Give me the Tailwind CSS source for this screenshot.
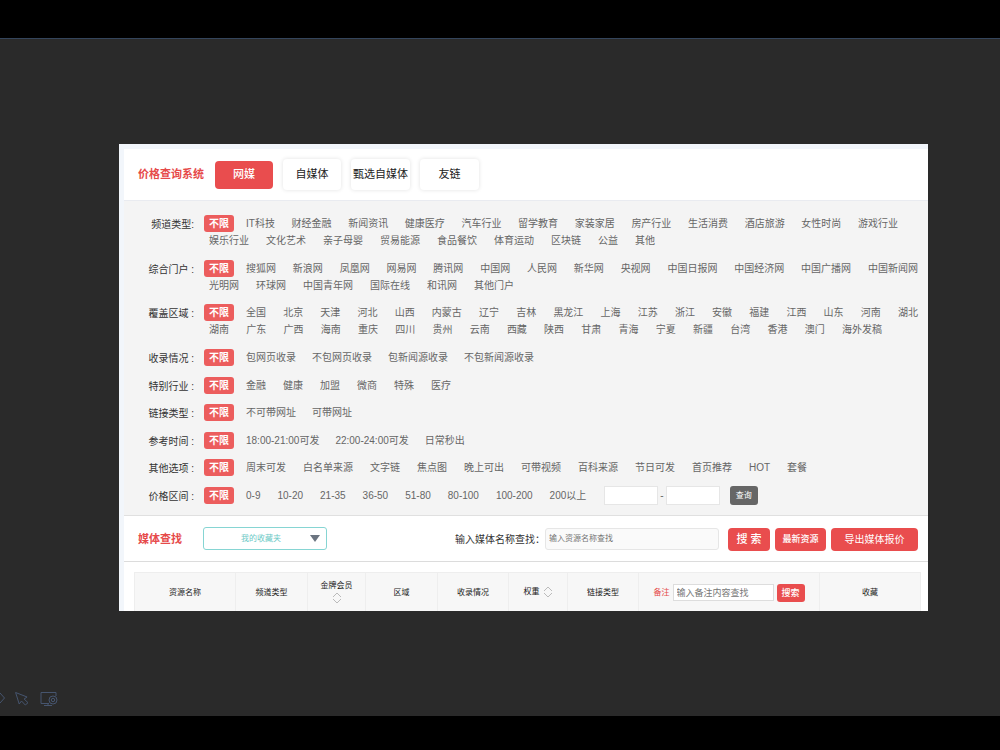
<!DOCTYPE html>
<html lang="zh-CN">
<head>
<meta charset="utf-8">
<title>价格查询系统</title>
<script src="https://cdn.jsdelivr.net/npm/@tailwindcss/browser@4"></script>
</head>
<body class="font-['Liberation_Sans','Noto_Sans_CJK_SC',sans-serif] bg-black">
<div class="flex min-h-screen flex-col py-[34px] pt-[38px]">
  <div class="flex grow flex-col border-t border-[#34455c] bg-[#2a2a2a]">
    <main class="mt-[105px] mr-[72px] ml-[119px] h-[467px] overflow-hidden bg-[#f2f6fb] pt-[5px] pl-[5px] text-[10px] leading-[17px] text-[#666]">

      <header class="flex h-[51px] items-center bg-white pl-3.5 text-[11px]">
        <h1 class="mr-[11px] font-bold text-[#e64a4a]">价格查询系统</h1>
        <nav class="flex items-center gap-[10px] text-[#222]">
          <button class="h-7 w-[58px] rounded bg-[#e94d4e] font-medium text-white">网媒</button>
          <button class="h-[31px] w-[58px] rounded whitespace-nowrap shadow-[0_0_4px_rgba(0,0,0,0.12)]">自媒体</button>
          <button class="h-[31px] w-[59px] rounded whitespace-nowrap shadow-[0_0_4px_rgba(0,0,0,0.12)]">甄选自媒体</button>
          <button class="h-[31px] w-[59px] rounded whitespace-nowrap shadow-[0_0_4px_rgba(0,0,0,0.12)]">友链</button>
        </nav>
      </header>

      <section class="border-t border-b border-t-[#e9ebf0] border-b-[#e0e0e0] bg-[#f4f4f4] pt-[14px] pr-[10px] pb-[11px]">
        <div class="flex h-[289px] flex-col justify-between">

          <div class="flex gap-[10px]">
            <div class="w-[70px] shrink-0 pt-0.5 text-right leading-[15px] text-[#333]">频道类型:</div>
            <div class="grow whitespace-nowrap">
              <div class="flex gap-3"><button class="h-[17px] w-[30px] shrink-0 rounded-[3px] bg-[#ec5d5d] font-bold text-white">不限</button>
                <div class="flex grow justify-between pr-5"><a href="#">IT科技</a><a href="#">财经金融</a><a href="#">新闻资讯</a><a href="#">健康医疗</a><a href="#">汽车行业</a><a href="#">留学教育</a><a href="#">家装家居</a><a href="#">房产行业</a><a href="#">生活消费</a><a href="#">酒店旅游</a><a href="#">女性时尚</a><a href="#">游戏行业</a></div></div>
              <div class="flex gap-[17px] pl-[5px]"><a href="#">娱乐行业</a><a href="#">文化艺术</a><a href="#">亲子母婴</a><a href="#">贸易能源</a><a href="#">食品餐饮</a><a href="#">体育运动</a><a href="#">区块链</a><a href="#">公益</a><a href="#">其他</a></div>
            </div>
          </div>

          <div class="flex gap-[10px]">
            <div class="w-[70px] shrink-0 pt-0.5 text-right leading-[15px] text-[#333]">综合门户 :</div>
            <div class="grow whitespace-nowrap">
              <div class="flex gap-3"><button class="h-[17px] w-[30px] shrink-0 rounded-[3px] bg-[#ec5d5d] font-bold text-white">不限</button>
                <div class="flex grow justify-between"><a href="#">搜狐网</a><a href="#">新浪网</a><a href="#">凤凰网</a><a href="#">网易网</a><a href="#">腾讯网</a><a href="#">中国网</a><a href="#">人民网</a><a href="#">新华网</a><a href="#">央视网</a><a href="#">中国日报网</a><a href="#">中国经济网</a><a href="#">中国广播网</a><a href="#">中国新闻网</a></div></div>
              <div class="flex gap-[17px] pl-[5px]"><a href="#">光明网</a><a href="#">环球网</a><a href="#">中国青年网</a><a href="#">国际在线</a><a href="#">和讯网</a><a href="#">其他门户</a></div>
            </div>
          </div>

          <div class="flex gap-[10px]">
            <div class="w-[70px] shrink-0 pt-0.5 text-right leading-[15px] text-[#333]">覆盖区域 :</div>
            <div class="grow whitespace-nowrap">
              <div class="flex gap-3"><button class="h-[17px] w-[30px] shrink-0 rounded-[3px] bg-[#ec5d5d] font-bold text-white">不限</button>
                <div class="flex grow justify-between"><a href="#">全国</a><a href="#">北京</a><a href="#">天津</a><a href="#">河北</a><a href="#">山西</a><a href="#">内蒙古</a><a href="#">辽宁</a><a href="#">吉林</a><a href="#">黑龙江</a><a href="#">上海</a><a href="#">江苏</a><a href="#">浙江</a><a href="#">安徽</a><a href="#">福建</a><a href="#">江西</a><a href="#">山东</a><a href="#">河南</a><a href="#">湖北</a></div></div>
              <div class="flex justify-between pr-9 pl-[5px]"><a href="#">湖南</a><a href="#">广东</a><a href="#">广西</a><a href="#">海南</a><a href="#">重庆</a><a href="#">四川</a><a href="#">贵州</a><a href="#">云南</a><a href="#">西藏</a><a href="#">陕西</a><a href="#">甘肃</a><a href="#">青海</a><a href="#">宁夏</a><a href="#">新疆</a><a href="#">台湾</a><a href="#">香港</a><a href="#">澳门</a><a href="#">海外发稿</a></div>
            </div>
          </div>

          <div class="flex gap-[10px]">
            <div class="w-[70px] shrink-0 pt-0.5 text-right leading-[15px] text-[#333]">收录情况 :</div>
            <div class="flex gap-3 whitespace-nowrap"><button class="h-[17px] w-[30px] rounded-[3px] bg-[#ec5d5d] font-bold text-white">不限</button>
              <div class="flex gap-4"><a href="#">包网页收录</a><a href="#">不包网页收录</a><a href="#">包新闻源收录</a><a href="#">不包新闻源收录</a></div></div>
          </div>

          <div class="flex gap-[10px]">
            <div class="w-[70px] shrink-0 pt-0.5 text-right leading-[15px] text-[#333]">特别行业 :</div>
            <div class="flex gap-3 whitespace-nowrap"><button class="h-[17px] w-[30px] rounded-[3px] bg-[#ec5d5d] font-bold text-white">不限</button>
              <div class="flex gap-[17px]"><a href="#">金融</a><a href="#">健康</a><a href="#">加盟</a><a href="#">微商</a><a href="#">特殊</a><a href="#">医疗</a></div></div>
          </div>

          <div class="flex gap-[10px]">
            <div class="w-[70px] shrink-0 pt-0.5 text-right leading-[15px] text-[#333]">链接类型 :</div>
            <div class="flex gap-3 whitespace-nowrap"><button class="h-[17px] w-[30px] rounded-[3px] bg-[#ec5d5d] font-bold text-white">不限</button>
              <div class="flex gap-4"><a href="#">不可带网址</a><a href="#">可带网址</a></div></div>
          </div>

          <div class="flex gap-[10px]">
            <div class="w-[70px] shrink-0 pt-0.5 text-right leading-[15px] text-[#333]">参考时间 :</div>
            <div class="flex gap-3 whitespace-nowrap"><button class="h-[17px] w-[30px] rounded-[3px] bg-[#ec5d5d] font-bold text-white">不限</button>
              <div class="flex gap-4"><a href="#">18:00-21:00可发</a><a href="#">22:00-24:00可发</a><a href="#">日常秒出</a></div></div>
          </div>

          <div class="flex gap-[10px]">
            <div class="w-[70px] shrink-0 pt-0.5 text-right leading-[15px] text-[#333]">其他选项 :</div>
            <div class="flex gap-3 whitespace-nowrap"><button class="h-[17px] w-[30px] rounded-[3px] bg-[#ec5d5d] font-bold text-white">不限</button>
              <div class="flex gap-[17px]"><a href="#">周末可发</a><a href="#">白名单来源</a><a href="#">文字链</a><a href="#">焦点图</a><a href="#">晚上可出</a><a href="#">可带视频</a><a href="#">百科来源</a><a href="#">节日可发</a><a href="#">首页推荐</a><a href="#">HOT</a><a href="#">套餐</a></div></div>
          </div>

          <div class="flex h-[17px] gap-[10px]">
            <div class="w-[70px] shrink-0 pt-0.5 text-right leading-[15px] text-[#333]">价格区间 :</div>
            <div class="flex gap-3 whitespace-nowrap"><button class="h-[17px] w-[30px] rounded-[3px] bg-[#ec5d5d] font-bold text-white">不限</button>
              <div class="flex gap-[17px]"><a href="#">0-9</a><a href="#">10-20</a><a href="#">21-35</a><a href="#">36-50</a><a href="#">51-80</a><a href="#">80-100</a><a href="#">100-200</a><a href="#">200以上</a></div>
              <div class="ml-1.5 flex h-[19px] items-center gap-0.5 self-center">
                <input type="text" aria-label="最低价格" class="h-[19px] w-[54px] border border-[#e6e6e6] bg-white px-1">
                <span>-</span>
                <input type="text" aria-label="最高价格" class="h-[19px] w-[54px] border border-[#e6e6e6] bg-white px-1">
                <button class="ml-2 h-[19px] w-7 rounded-[3px] bg-[#666] text-[8px] text-white">查询</button>
              </div>
            </div>
          </div>
        </div>
      </section>

      <section class="flex h-[46px] items-center border-b border-[#dcdcdc] bg-white pr-[10px] pl-3.5 whitespace-nowrap">
        <h2 class="pt-0.5 text-[11px] font-bold text-[#e64a4a]">媒体查找</h2>
        <div class="relative ml-[21px]">
          <select aria-label="收藏夹" class="block h-[23px] w-[124px] appearance-none rounded-[3px] border border-[#86d5d3] bg-white pr-2 text-center text-[8px] text-[#6cc9c6]"><option>我的收藏夹</option></select>
          <svg class="pointer-events-none absolute top-2 right-[7px] h-[7px] w-[10px]" viewBox="0 0 10 7"><path d="M0 0h10L5 7z" fill="#6b7480"/></svg>
        </div>
        <label for="media" class="ml-auto pt-0.5 text-[#333]">输入媒体名称查找：</label>
        <input id="media" type="text" placeholder="输入资源名称查找" class="h-[22px] w-[174px] rounded-[3px] border border-[#e6e6e6] bg-[#fafafa] px-[3px] text-[8px] placeholder:text-[#757575]">
        <div class="ml-[9px] flex gap-[5px] pt-0.5 text-white">
          <button class="h-[23px] w-[42px] rounded bg-[#e94d4e] text-[11px] font-medium">搜 索</button>
          <button class="h-[23px] w-[51px] rounded bg-[#e94d4e] text-[9px] font-medium">最新资源</button>
          <button class="h-[23px] w-[87px] rounded bg-[#e94d4e]">导出媒体报价</button>
        </div>
      </section>

      <section class="bg-white pt-[10px] pr-[7px] pl-[10px]">
        <table class="w-full table-fixed border-collapse text-[8px] leading-3 text-[#222]">
          <thead>
            <tr class="h-10 bg-[#f7f7f7] *:border *:border-[#eee] *:p-0 *:font-normal">
              <th class="w-[101px]">资源名称</th>
              <th class="w-[72px]">频道类型</th>
              <th class="w-[58px]"><div class="flex flex-col items-center pb-0.5">金牌会员<svg class="h-3 w-[10px]" viewBox="0 0 10 12" fill="none" stroke="#bbb"><path d="M1 5l4-4 4 4M1 7l4 4 4-4"/></svg></div></th>
              <th class="w-[72px]">区域</th>
              <th class="w-[71px]">收录情况</th>
              <th class="w-[59px]"><div class="flex items-center justify-center gap-[3px] pb-0.5">权重<svg class="h-3 w-[10px]" viewBox="0 0 10 12" fill="none" stroke="#bbb"><path d="M1 5l4-4 4 4M1 7l4 4 4-4"/></svg></div></th>
              <th class="w-[71px]">链接类型</th>
              <th class="w-[181px]"><div class="flex items-center justify-center gap-[3px]">
                <label for="note" class="text-[#e64a4a]">备注</label>
                <input id="note" type="text" placeholder="输入备注内容查找" class="h-[17px] w-[101px] border border-[#ddd] bg-white px-[3px] text-[9px] font-normal placeholder:text-[#757575]">
                <button class="h-[18px] w-7 rounded-[3px] bg-[#e94d4e] text-[9px] font-medium text-white">搜索</button></div></th>
              <th>收藏</th>
            </tr>
          </thead>
        </table>
      </section>
    </main>

    <footer class="mt-auto mb-[9px] flex h-4 items-center gap-[11px]" aria-label="工具">
      <svg class="h-4 w-[5px]" viewBox="0 0 5 16" fill="none" stroke="#46556f"><path d="M0 2l4.500 5L0 12"/></svg>
      <svg class="-ml-[1px] h-4 w-[14px]" viewBox="0 0 14 16" fill="none" stroke="#46556f" stroke-linejoin="round"><path d="M.6 1.500l3.600 11.500 2.300-3 3.800 4 2.700-2.300-3.900-3.700 3-2z"/></svg>
      <svg class="h-4 w-[18px]" viewBox="0 0 18 16" fill="none" stroke="#46556f"><path d="M9 12.500H1v-11h15V5M8 12.500v2M4 14.500h8"/><circle cx="13" cy="9" r="4"/><circle cx="13" cy="9" r="1.700"/></svg>
    </footer>
  </div>
</div>
</body>
</html>
